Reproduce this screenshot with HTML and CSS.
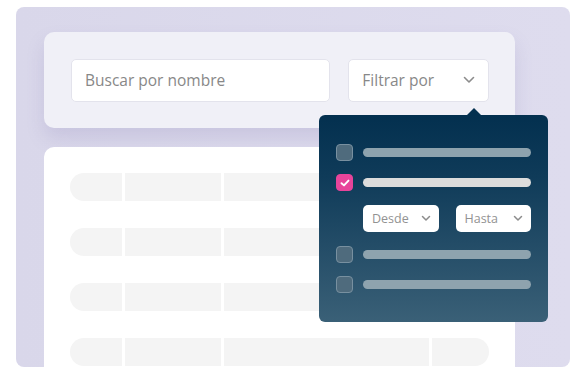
FILE: index.html
```html
<!DOCTYPE html>
<html lang="es">
<head>
  <meta charset="UTF-8">
  <title>Filtros</title>
  <link rel="stylesheet" href="styles.css">
</head>
<body>
  <div class="panel">
    <!-- Barra de búsqueda -->
    <div class="search-card">
      <div class="field field-search">Buscar por nombre</div>
      <div class="field field-filter">
        <span>Filtrar por</span>
        <svg class="chev" width="12" height="8" viewBox="0 0 12 8"><path d="M1.5 1.5 L6 6 L10.5 1.5" fill="none" stroke="#8c8c8c" stroke-width="1.6" stroke-linecap="round" stroke-linejoin="round"/></svg>
      </div>
    </div>

    <!-- Tabla de ejemplo -->
    <div class="table-card">
      <div class="row"><span class="c1"></span><span class="c2"></span><span class="c3"></span></div>
      <div class="row"><span class="c1"></span><span class="c2"></span><span class="c3"></span></div>
      <div class="row"><span class="c1"></span><span class="c2"></span><span class="c3"></span></div>
      <div class="row"><span class="c1"></span><span class="c2"></span><span class="c3 short"></span><span class="c4"></span></div>
    </div>

    <!-- Menú desplegable de filtros -->
    <div class="dropdown">
      <div class="opt"><span class="box"></span><span class="bar"></span></div>
      <div class="opt"><span class="box checked"><svg width="10" height="8" viewBox="0 0 10 8"><path d="M1.5 4.2 L4 6.4 L8.5 1.6" fill="none" stroke="#fff" stroke-width="1.9" stroke-linecap="round" stroke-linejoin="round"/></svg></span><span class="bar light"></span></div>
      <div class="dates">
        <div class="mini">Desde<svg width="10" height="7" viewBox="0 0 10 7"><path d="M1.5 1.5 L5 5 L8.5 1.5" fill="none" stroke="#8c8c8c" stroke-width="1.5" stroke-linecap="round" stroke-linejoin="round"/></svg></div>
        <div class="mini">Hasta<svg width="10" height="7" viewBox="0 0 10 7"><path d="M1.5 1.5 L5 5 L8.5 1.5" fill="none" stroke="#8c8c8c" stroke-width="1.5" stroke-linecap="round" stroke-linejoin="round"/></svg></div>
      </div>
      <div class="opt"><span class="box"></span><span class="bar"></span></div>
      <div class="opt"><span class="box"></span><span class="bar"></span></div>
    </div>
  </div>
</body>
</html>
```

FILE: styles.css
```css
* {
  box-sizing: border-box;
  margin: 0;
  padding: 0;
}

body {
  background: #fff;
  padding: 7px 1px 0 16px;
  font-family: 'Open Sans', sans-serif;
}

.panel {
  position: relative;
  width: 554px;
  height: 360px;
  background: linear-gradient(90deg, #d9d7ea, #dedcee);
  border-radius: 8px;
  padding: 25px 55px 0 28px;
  overflow: hidden;
}

/* Tarjeta de búsqueda */
.search-card {
  height: 96px;
  background: #f0f0f7;
  border-radius: 10px;
  display: flex;
  align-items: center;
  gap: 18px;
  padding: 0 26px 0 27px;
  box-shadow: 0 10px 18px rgba(120, 110, 170, 0.18);
}

.field {
  height: 43px;
  background: #fff;
  border: 1px solid #e3e3ec;
  border-radius: 5px;
  display: flex;
  align-items: center;
  color: #888;
  font-size: 15.5px;
}

.field-search {
  width: 260px;
  padding-left: 13px;
}

.field-filter {
  width: 141px;
  padding: 0 13px 0 13px;
  justify-content: space-between;
}

/* Tabla */
.table-card {
  margin-top: 19px;
  height: 260px;
  background: #fff;
  border-radius: 10px 10px 0 0;
  padding: 26px 26px 0 26px;
  display: flex;
  flex-direction: column;
  gap: 27px;
}

.row {
  display: flex;
  gap: 3px;
  height: 28px;
}

.row span {
  background: #f4f4f4;
}

.c1 {
  width: 52px;
  border-radius: 14px 0 0 14px;
}

.c2 {
  width: 96px;
}

.c3 {
  flex: 1;
  border-radius: 0 14px 14px 0;
}

.c3.short {
  border-radius: 0;
}

.c4 {
  width: 57px;
  border-radius: 0 14px 14px 0;
}

/* Desplegable */
.dropdown {
  position: absolute;
  left: 303px;
  top: 108px;
  width: 229px;
  height: 207px;
  border-radius: 6px;
  background: linear-gradient(180deg, #03304f 0%, #0f3b59 30%, #3a6077 100%);
  padding: 29px 17px 0 17px;
  display: flex;
  flex-direction: column;
  gap: 14px;
}

.dropdown::before {
  content: "";
  position: absolute;
  top: -7px;
  left: 147px;
  border-left: 8px solid transparent;
  border-right: 8px solid transparent;
  border-bottom: 8px solid #03304f;
}

.opt {
  display: flex;
  align-items: center;
  gap: 10px;
  height: 17px;
}

.opt + .opt {
  margin-top: -1px;
}

.box {
  width: 17px;
  height: 17px;
  border-radius: 4px;
  background: #4f6b7d;
  border: 1px solid #7890a0;
  display: flex;
  align-items: center;
  justify-content: center;
}

.box.checked {
  background: #e8449a;
  border-color: #e8449a;
}

.bar {
  flex: 1;
  height: 9px;
  border-radius: 5px;
  background: #8ea3ae;
}

.bar.light {
  background: #dcdcdc;
}

.dates {
  display: flex;
  gap: 17px;
  padding-left: 27px;
}

.mini {
  width: 76px;
  height: 27px;
  background: #fff;
  border-radius: 5px;
  display: flex;
  align-items: center;
  justify-content: space-between;
  padding: 0 8px 0 9px;
  font-size: 12.5px;
  color: #929292;
}
```
